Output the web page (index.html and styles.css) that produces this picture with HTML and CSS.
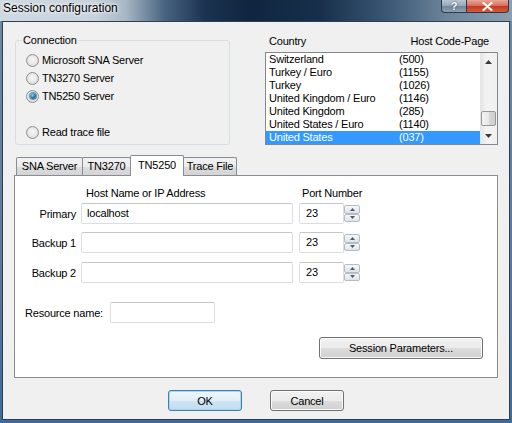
FILE: index.html
```html
<!DOCTYPE html>
<html>
<head>
<meta charset="utf-8">
<link rel="stylesheet" href="styles.css">
</head>
<body>
<div class="window">
  <div class="titlebar">
    <span class="title">Session configuration</span>
    <div class="caption-btns">
      <span class="cbtn help">?</span>
      <span class="cbtn close"><svg width="11" height="9" viewBox="0 0 11 9"><path d="M1.5 1 L9.5 8 M9.5 1 L1.5 8" stroke="#fff" stroke-width="2.2" stroke-linecap="round"/></svg></span>
    </div>
  </div>
  <div class="client">
    <div class="top">
      <div class="group">
        <span class="legend">Connection</span>
        <div class="radio-row"><span class="radio"></span>Microsoft SNA Server</div>
        <div class="radio-row"><span class="radio"></span>TN3270 Server</div>
        <div class="radio-row"><span class="radio on"></span>TN5250 Server</div>
        <div class="spacer"></div>
        <div class="radio-row"><span class="radio"></span>Read trace file</div>
      </div>
      <div class="country">
        <div class="country-head"><span>Country</span><span>Host Code-Page</span></div>
        <div class="listbox">
          <div class="items">
            <div class="item"><span class="c1">Switzerland</span><span>(500)</span></div>
            <div class="item"><span class="c1">Turkey / Euro</span><span>(1155)</span></div>
            <div class="item"><span class="c1">Turkey</span><span>(1026)</span></div>
            <div class="item"><span class="c1">United Kingdom / Euro</span><span>(1146)</span></div>
            <div class="item"><span class="c1">United Kingdom</span><span>(285)</span></div>
            <div class="item"><span class="c1">United States / Euro</span><span>(1140)</span></div>
            <div class="item sel"><span class="c1">United States</span><span>(037)</span></div>
          </div>
          <div class="scrollbar">
            <div class="sbtn"><svg width="7" height="4" viewBox="0 0 7 4"><path d="M0 4 L3.5 0 L7 4 Z" fill="#3a3a3a"/></svg></div>
            <div class="track"><div class="thumb"></div></div>
            <div class="sbtn"><svg width="7" height="4" viewBox="0 0 7 4"><path d="M0 0 L3.5 4 L7 0 Z" fill="#3a3a3a"/></svg></div>
          </div>
        </div>
      </div>
    </div>
    <div class="tabs">
      <div class="tab t1">SNA Server</div>
      <div class="tab t2">TN3270</div>
      <div class="tab t3 active">TN5250</div>
      <div class="tab t4">Trace File</div>
    </div>
    <div class="panel">
      <div class="frow hdr">
        <span class="lbl"></span>
        <span class="hcol">Host Name or IP Address</span>
        <span class="pcol">Port Number</span>
      </div>
      <div class="frow r1">
        <span class="lbl">Primary</span>
        <div class="field host">localhost</div>
        <div class="port"><div class="field pfield">23</div><div class="spin"><span class="sp"><svg width="5" height="3" viewBox="0 0 5 3"><path d="M0 3 L2.5 0 L5 3Z" fill="#4a5a6a"/></svg></span><span class="sp"><svg width="5" height="3" viewBox="0 0 5 3"><path d="M0 0 L2.5 3 L5 0Z" fill="#4a5a6a"/></svg></span></div></div>
      </div>
      <div class="frow r2">
        <span class="lbl">Backup 1</span>
        <div class="field host"></div>
        <div class="port"><div class="field pfield">23</div><div class="spin"><span class="sp"><svg width="5" height="3" viewBox="0 0 5 3"><path d="M0 3 L2.5 0 L5 3Z" fill="#4a5a6a"/></svg></span><span class="sp"><svg width="5" height="3" viewBox="0 0 5 3"><path d="M0 0 L2.5 3 L5 0Z" fill="#4a5a6a"/></svg></span></div></div>
      </div>
      <div class="frow r3">
        <span class="lbl">Backup 2</span>
        <div class="field host"></div>
        <div class="port"><div class="field pfield">23</div><div class="spin"><span class="sp"><svg width="5" height="3" viewBox="0 0 5 3"><path d="M0 3 L2.5 0 L5 3Z" fill="#4a5a6a"/></svg></span><span class="sp"><svg width="5" height="3" viewBox="0 0 5 3"><path d="M0 0 L2.5 3 L5 0Z" fill="#4a5a6a"/></svg></span></div></div>
      </div>
      <div class="res-row">
        <span class="res-lbl">Resource name:</span>
        <div class="field res"></div>
      </div>
      <div class="sp-row">
        <div class="btn sess">Session Parameters...</div>
      </div>
    </div>
    <div class="buttons">
      <div class="btn default">OK</div>
      <div class="btn">Cancel</div>
    </div>
  </div>
</div>
</body>
</html>
```
FILE: styles.css
```css
* { box-sizing: border-box; }
html, body { margin: 0; padding: 0; }
body {
  width: 512px; height: 423px; overflow: hidden;
  font-family: "Liberation Sans", Arial, sans-serif;
  font-size: 11px; letter-spacing: -0.2px; color: #000;
}
.window {
  width: 512px; height: 423px;
  display: flex; flex-direction: column;
  background: linear-gradient(to bottom, #6f8aa3 0, #56769a 70%, #3f6a9c 100%);
}
.titlebar {
  height: 21px; flex: none;
  display: flex; justify-content: space-between; align-items: flex-start;
  background: linear-gradient(to right, #cfd9e2 0, #c8d2db 95px, #a9b8c6 125px, #48637f 165px, #1b3350 205px, #10263f 250px, #172f4b 320px, #3c5976 390px, #6c8399 445px, #8c9fb1 512px);
}
.title {
  font-size: 12px; letter-spacing: 0;
  padding-left: 3px; line-height: 17px;
  text-shadow: 0 0 5px #fff, 0 0 3px #fff;
}
.caption-btns { display: flex; margin-right: 3px; height: 13px; }
.cbtn {
  height: 13px; display: flex; align-items: center; justify-content: center;
  border: 1px solid #2a3a4c; border-top: none;
}
.help {
  width: 26px; border-radius: 0 0 0 4px;
  color: #fff; font-weight: bold; font-size: 11px; letter-spacing: 0;
  text-shadow: 0 0 2px #223344;
  background: linear-gradient(#b9c6d2 0, #94a6b7 50%, #6f859b 51%, #8ea2b5 100%);
}
.close {
  width: 42px; border-left: none; border-radius: 0 0 4px 0;
  background: linear-gradient(#e9a596 0, #d57561 45%, #c23a20 52%, #d65b3d 100%);
}
.client {
  flex: none; height: 399px; margin: 0 2px;
  border: 1px solid #2f3f52; background: #f0f0f0;
}
.top { display: flex; padding-left: 12px; height: 123px; }
.group {
  position: relative; margin-top: 18px;
  width: 215px; height: 105px;
  border: 1px solid #d5dfe5; border-radius: 3px;
  padding: 10px 0 0 10px;
}
.legend {
  position: absolute; top: -7px; left: 6px;
  padding: 0 1px; background: #f0f0f0; line-height: 13px;
}
.radio-row { display: flex; align-items: center; height: 18px; }
.spacer { height: 18px; }
.radio {
  flex: none; width: 13px; height: 13px; margin-right: 3px;
  border-radius: 50%; border: 1px solid #8e8f8f;
  background: radial-gradient(circle at 50% 45%, #f8f8f8 0, #e9e9e9 45%, #d2d2d2 100%);
  display: flex; align-items: center; justify-content: center;
}
.radio.on::after {
  content: ""; width: 6px; height: 6px; border-radius: 50%;
  background: radial-gradient(circle at 40% 35%, #8fd0f0 0, #2a6f9c 55%, #0d3a5c 100%);
  box-shadow: 0 0 0 1px #6a9cbc;
}
.country { margin-left: 35px; margin-top: 13px; width: 233px; }
.country-head {
  display: flex; justify-content: space-between;
  padding: 0 9px 0 4px; height: 13px; line-height: 13px; margin-bottom: 4px;
}
.listbox {
  height: 93px; border: 1px solid #828790; background: #fff; display: flex;
}
.items { flex: 1; }
.item { display: flex; height: 13px; line-height: 13px; padding-left: 3px; }
.item .c1 { width: 130px; }
.item.sel { background: #3399ff; color: #fff; }
.scrollbar {
  width: 17px; display: flex; flex-direction: column;
  background: linear-gradient(to right, #e4e4e4 0, #f3f3f3 40%, #f0f0f0 100%);
}
.sbtn { height: 17px; display: flex; align-items: center; justify-content: center; }
.track { flex: 1; display: flex; flex-direction: column; justify-content: flex-end; padding: 0 1px 1px 1px; }
.thumb {
  height: 15px; border: 1px solid #979797; border-radius: 2px;
  background: linear-gradient(to right, #f4f4f4 0, #e8e8e8 50%, #d6d6d6 51%, #cfcfcf 100%);
}
.tabs {
  display: flex; align-items: flex-end;
  height: 20px; margin-top: 10px; padding-left: 13px;
}
.tab {
  height: 18px; border: 1px solid #898c95; border-bottom: none;
  margin-left: -1px; border-radius: 2px 2px 0 0;
  background: linear-gradient(#f2f2f2 0, #ebebeb 50%, #dddddd 51%, #d4d4d4 100%);
  text-align: center; line-height: 17px;
}
.t1 { width: 67px; margin-left: 0; }
.t2 { width: 49px; }
.t3 { width: 54px; }
.t4 { width: 54px; }
.tab.active {
  height: 21px; margin-bottom: -1px; background: #fff;
  position: relative; z-index: 1; line-height: 19px;
}
.panel {
  margin-left: 11px; width: 484px; height: 203px;
  border: 1px solid #898c95; background: #fff; padding-top: 11px;
}
.frow { display: flex; align-items: center; height: 21px; }
.hdr { height: 13px; line-height: 13px; }
.r1 { margin-top: 3px; }
.r2 { margin-top: 8px; }
.r3 { margin-top: 9px; }
.lbl { width: 61px; text-align: right; flex: none; }
.hcol { margin-left: 5px; width: 212px; padding-left: 5px; }
.pcol { margin-left: 6px; padding-left: 3px; }
.field {
  height: 21px; background: #fff;
  border: 1px solid #dadde2; border-top-color: #c3c6cc; border-radius: 2px;
  padding-left: 5px; line-height: 19px;
}
.host { margin-left: 5px; width: 212px; }
.port { margin-left: 6px; display: flex; align-items: center; }
.pfield { width: 45px; padding-left: 6px; }
.spin { width: 16px; height: 17px; display: flex; flex-direction: column; }
.sp {
  height: 8.5px; display: flex; align-items: center; justify-content: center;
  border: 1px solid #b5bcc5; border-radius: 2px;
  background: linear-gradient(#f6f8fa, #dde3e9);
}
.res-row { display: flex; align-items: center; height: 21px; margin-top: 19px; padding-left: 10px; }
.res-lbl { width: 85px; flex: none; }
.res { width: 105px; }
.sp-row { display: flex; justify-content: flex-end; margin-top: 14px; padding-right: 14px; }
.btn {
  height: 21px; display: flex; align-items: center; justify-content: center;
  border: 1px solid #707070; border-radius: 3px;
  background: linear-gradient(#f2f2f2 0, #ebebeb 50%, #dddddd 51%, #cfcfcf 100%);
  box-shadow: inset 0 0 0 1px #fbfbfb;
}
.sess { width: 164px; height: 22px; }
.buttons { display: flex; justify-content: center; gap: 28px; margin-top: 12px; }
.buttons .btn { width: 74px; }
.btn.default {
  border-color: #3c7fb1;
  background: linear-gradient(#eef6fb 0, #e1eef7 50%, #cfe4f3 51%, #c1dcef 100%);
  box-shadow: inset 0 0 0 1px #a8d8f0;
}
```
